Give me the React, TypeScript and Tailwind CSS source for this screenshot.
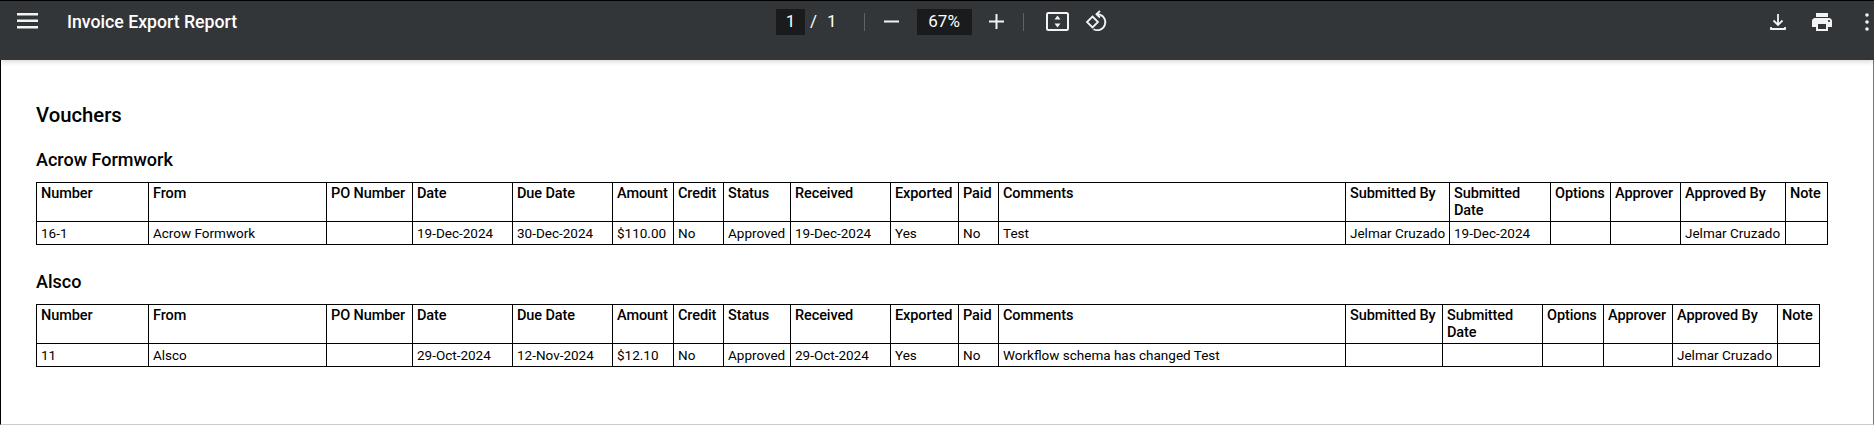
import React from "react";

const headers = [
  "Number",
  "From",
  "PO Number",
  "Date",
  "Due Date",
  "Amount",
  "Credit",
  "Status",
  "Received",
  "Exported",
  "Paid",
  "Comments",
  "Submitted By",
  "Submitted Date",
  "Options",
  "Approver",
  "Approved By",
  "Note",
];

const groups = [
  {
    name: "Acrow Formwork",
    widths: [112, 178, 86, 100, 100, 61, 50, 67, 100, 68, 40, 347, 104, 101, 60, 70, 105, 42],
    row: ["16-1", "Acrow Formwork", "", "19-Dec-2024", "30-Dec-2024", "$110.00", "No", "Approved", "19-Dec-2024", "Yes", "No", "Test", "Jelmar Cruzado", "19-Dec-2024", "", "", "Jelmar Cruzado", ""],
  },
  {
    name: "Alsco",
    widths: [112, 178, 86, 100, 100, 61, 50, 67, 100, 68, 40, 347, 97, 100, 61, 69, 105, 42],
    row: ["11", "Alsco", "", "29-Oct-2024", "12-Nov-2024", "$12.10", "No", "Approved", "29-Oct-2024", "Yes", "No", "Workflow schema has changed Test", "", "", "", "", "Jelmar Cruzado", ""],
  },
];

function VoucherTable({ widths, row }: { widths: number[]; row: string[] }) {
  const total = widths.reduce((a, b) => a + b, 0);
  return (
    <table className="table-fixed border-collapse text-[13.5px] leading-[17px] text-black" style={{ width: total + 1 }}>
      <colgroup>
        {widths.map((w, i) => (
          <col key={i} style={{ width: w }} />
        ))}
      </colgroup>
      <thead>
        <tr className="h-[39px]">
          {headers.map((h) => (
            <th key={h} className="border border-black px-[4px] pt-[2px] align-top text-left text-[14.5px] leading-[17px] font-medium tracking-[-0.1px]">
              {h}
            </th>
          ))}
        </tr>
      </thead>
      <tbody>
        <tr className="h-[23px]">
          {row.map((c, i) => (
            <td key={i} className="border border-black px-[4px] align-middle whitespace-nowrap overflow-hidden">
              {c}
            </td>
          ))}
        </tr>
      </tbody>
    </table>
  );
}

export default function App() {
  return (
    <div className="h-[425px] w-[1874px] overflow-hidden bg-white font-['Roboto',sans-serif]">
      <header className="relative z-10 flex h-[60px] items-center border-t border-t-black bg-[#323639] pb-[18px] text-white shadow-[0_1px_6px_rgba(0,0,0,0.2)]">
        <div className="flex w-[776px] items-center">
          <svg className="ml-[16px] h-[24px] w-[24px]" viewBox="0 0 24 24" fill="#f1f3f4">
            <rect x="1" y="4" width="21" height="2.500" />
            <rect x="1" y="10.500" width="21" height="2.500" />
            <rect x="1" y="17" width="21" height="2.500" />
          </svg>
          <span className="ml-[27px] pt-[1px] text-[17.7px] font-medium">Invoice Export Report</span>
        </div>
        <div className="flex items-center text-[17px]">
          <span className="flex h-[26px] w-[29px] items-center justify-center bg-[#191b1c]">1</span>
          <span className="ml-[5px]">/</span>
          <span className="ml-[10px]">1</span>
          <span className="ml-[27px] h-[18px] w-px bg-[#5f6368]" />
          <svg className="ml-[19px] h-[15px] w-[15px]" viewBox="0 0 15 15" fill="#f1f3f4">
            <rect x="0" y="6.500" width="15" height="2" />
          </svg>
          <span className="ml-[18px] flex h-[26px] w-[55px] items-center justify-center bg-[#191b1c]">67%</span>
          <svg className="ml-[17px] h-[15px] w-[15px]" viewBox="0 0 15 15" fill="#f1f3f4">
            <rect x="0" y="6.500" width="15" height="2" />
            <rect x="6.500" y="0" width="2" height="15" />
          </svg>
          <span className="ml-[19px] h-[18px] w-px bg-[#5f6368]" />
          <svg className="ml-[22px] h-[19px] w-[23px]" viewBox="0 0 23 19" fill="none">
            <rect x="1" y="1" width="21" height="17" rx="1.500" stroke="#f1f3f4" strokeWidth="2" />
            <path d="M11.500 3.500 14.500 7.500H8.500ZM11.500 15.500 8.500 11.500H14.500Z" fill="#f1f3f4" />
          </svg>
          <svg className="ml-[16px] h-[24px] w-[24px]" viewBox="0 0 24 24" fill="none" stroke="#f1f3f4" strokeWidth="1.800">
            <path d="M7.500 6.500 13 12 7.500 17.500 2 12Z" />
            <path d="M11 4.200H13A8 8 0 1 1 8.500 19.200" />
            <path d="M15 1 11.500 4.200 15 7.500" />
          </svg>
        </div>
        <div className="ml-auto mr-[4px] flex items-center">
          <svg className="h-[20px] w-[20px]" viewBox="0 0 20 20" fill="none" stroke="#f1f3f4" strokeWidth="1.800">
            <path d="M10 2v11M5.500 8.500 10 13 14.500 8.500M3 15v2h14v-2" />
          </svg>
          <svg className="ml-[22px] h-[24px] w-[24px]" viewBox="0 0 24 24" fill="#f1f3f4">
            <path d="M19 8H5c-1.660 0-3 1.340-3 3v6h4v4h12v-4h4v-6c0-1.660-1.340-3-3-3zm-3 11H8v-5h8v5zm3-7c-.550 0-1-.450-1-1s.450-1 1-1 1 .450 1 1-.450 1-1 1zm-1-9H6v4h12V3z" />
          </svg>
          <svg className="ml-[30px] h-[20px] w-[6px]" viewBox="0 0 6 20" fill="#f1f3f4">
            <circle cx="3" cy="3" r="1.800" />
            <circle cx="3" cy="10" r="1.800" />
            <circle cx="3" cy="17" r="1.800" />
          </svg>
        </div>
      </header>
      <main className="h-[365px] border-r border-b border-l border-r-[#777] border-b-[#ccc] border-l-black pl-[35px] pt-[41px] text-black">
        <h1 className="text-[20.3px] leading-[28px] font-medium">Vouchers</h1>
        <h2 className="mt-[19px] text-[18px] leading-[24px] font-medium">{groups[0].name}</h2>
        <div className="mt-[10px]">
          <VoucherTable widths={groups[0].widths} row={groups[0].row} />
        </div>
        <h2 className="mt-[25px] text-[18px] leading-[24px] font-medium">{groups[1].name}</h2>
        <div className="mt-[10px]">
          <VoucherTable widths={groups[1].widths} row={groups[1].row} />
        </div>
      </main>
    </div>
  );
}
